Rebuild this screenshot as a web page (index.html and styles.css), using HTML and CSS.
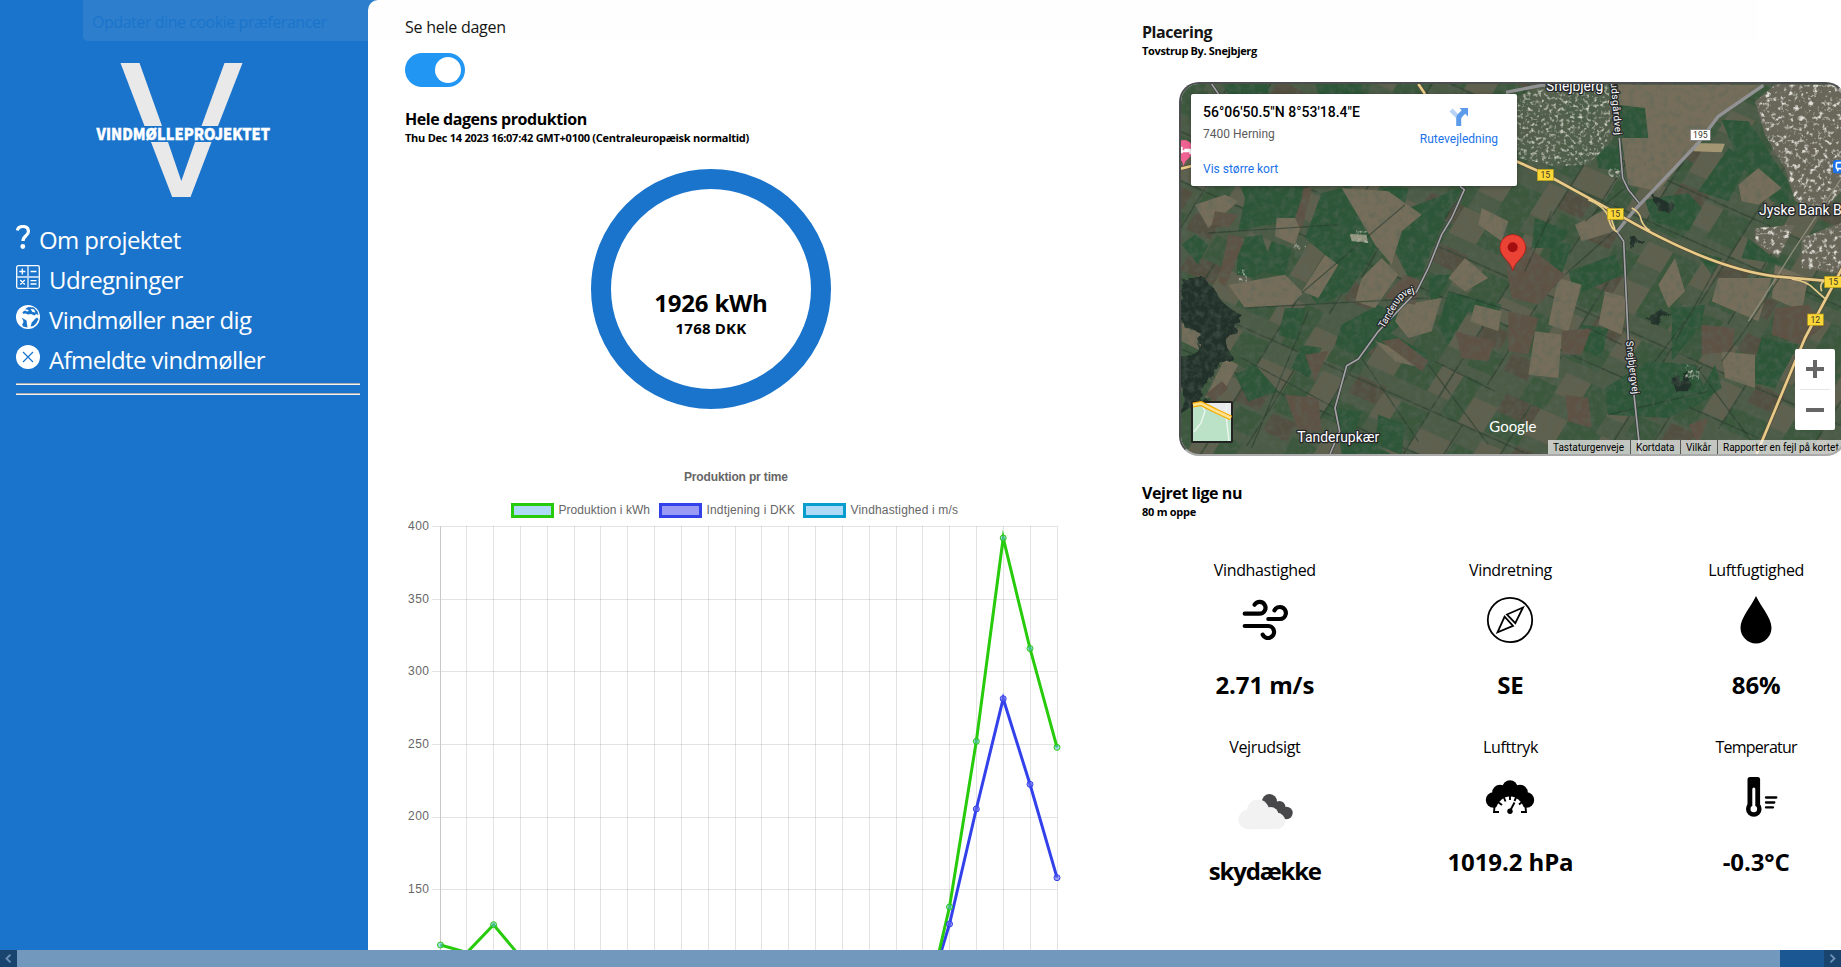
FILE: index.html
```html
<!DOCTYPE html>
<html lang="da">
<head>
<meta charset="utf-8">
<title>Vindmølleprojektet</title>
<link rel="stylesheet" href="styles.css">
</head>
<body>
<div class="page">
  <nav class="sidebar">
    <svg class="logo" width="180" height="140" viewBox="94 60 180 140">
      <g fill="#e9e9e9">
        <path d="M120.5 63H139.5L162 126H144.500Z"/>
        <path d="M224.500 63H242.500L218 126H201.500Z"/>
        <path d="M151 142H168L181.300 181L195 142H211.500L190.500 197H172.200Z"/>
      </g>
      <text class="logo-text" x="96.500" y="139.500" textLength="173.500" lengthAdjust="spacingAndGlyphs">VINDMØLLEPROJEKTET</text>
    </svg>
    <ul class="menu">
      <li><svg width="14" height="24" viewBox="0 0 14 24"><path d="M1.300 5.500C2 2.500 4 1.500 7 1.500C10.500 1.500 12.400 3.500 12.400 6.500C12.400 11 7 10.500 7 16" fill="none" stroke="#fff" stroke-width="3.200"/><circle cx="6.800" cy="21.500" r="2.400" fill="#fff"/></svg><a>Om projektet</a></li>
      <li><svg width="24" height="24" viewBox="0 0 24 24" fill="none" stroke="#fff" stroke-width="1.300"><rect x=".7" y=".7" width="22.600" height="22.600" rx="1.500"/><path d="M12 1V23M1 12H23" stroke="#b5d3f0" stroke-width="1.800"/><path d="M3.300 6.500H9.300M6.300 3.500V9.500M14.500 6.500H20.500M4.300 15L8.800 19.500M8.800 15L4.300 19.500M14.500 15.700H20.500M14.500 19H20.500"/></svg><a>Udregninger</a></li>
      <li><svg width="24" height="24" viewBox="0 0 24 24"><circle cx="12" cy="12" r="12" fill="#fff"/><path d="M8 1.200L11 1.500L10 3.500L6.500 6L4.500 9L7 9.500L6.500 11L3.500 10L1.500 8.500L4 4Z" fill="#fff"/><path d="M12.500 2L18 2.500L21.500 6.500L22.500 10L20 9L18.500 10.500L15 9L12 9.500L9.500 8.500L7 8.800L6.500 7L9 5.500L11 6.500L13 6L11.500 4.500L9 4.500L10.500 3ZM5.500 12.500L10.500 15.500L11 19L11.500 22.500L7 21.500L6.200 19.500L7.500 17L7 15Z" fill="#1b74cb"/><path d="M14.500 21.500L15.800 17.500L19 14L21 12.500L22.500 14L20.500 18L17.500 21Z" fill="#1b74cb"/><path d="M14.500 4L18 4.200L19.500 7.500L16.500 7Z" fill="#fff"/></svg><a>Vindmøller nær dig</a></li>
      <li><svg width="24" height="24" viewBox="0 0 24 24"><circle cx="12" cy="12" r="12" fill="#fff"/><path d="M7 7L17 17M17 7L7 17" stroke="#1b74cb" stroke-width="1.300"/></svg><a>Afmeldte vindmøller</a></li>
    </ul>
    <hr class="rule"><hr class="rule">
  </nav>

  <main class="panel">
    <section class="production">
      <div class="switch-label">Se hele dagen</div>
      <div class="switch"><span class="knob"></span></div>
      <h2 class="heading">Hele dagens produktion</h2>
      <p class="sub">Thu Dec 14 2023 16:07:42 GMT+0100 (Centraleuropæisk normaltid)</p>
      <div class="ring"><strong class="kwh">1926 kWh</strong><strong class="dkk">1768 DKK</strong></div>
      <svg class="chart" width="737" height="541" viewBox="405 409 737 541">
        <text class="chart-title" x="684" y="481" textLength="104">Produktion pr time</text>
        <g stroke-width="3">
          <rect x="512.500" y="504.500" width="40" height="12" fill="#aedaf8" stroke="#27cb0b"/>
          <rect x="660.500" y="504.500" width="40" height="12" fill="#9a9bf5" stroke="#3341eb"/>
          <rect x="804.500" y="504.500" width="40" height="12" fill="#aedaf8" stroke="#079dcd"/>
        </g>
        <text x="558.500" y="514" textLength="91.500">Produktion i kWh</text>
        <text x="706.500" y="514" textLength="88.500">Indtjening i DKK</text>
        <text x="850.500" y="514" textLength="107.500">Vindhastighed i m/s</text>
        <g class="ylabels" text-anchor="end">
          <text x="429" y="530" textLength="21">400</text><text x="429" y="603" textLength="21">350</text><text x="429" y="675" textLength="21">300</text>
          <text x="429" y="748" textLength="21">250</text><text x="429" y="820" textLength="21">200</text><text x="429" y="893" textLength="21">150</text>
        </g>
        <path stroke="#000" stroke-opacity=".11" fill="none" d="M432 526.500H1057M432 599.500H1057M432 671.500H1057M432 744.500H1057M432 817.500H1057M432 889.500H1057M466.500 526V950M493.500 526V950M520.500 526V950M547.500 526V950M574.500 526V950M600.500 526V950M627.500 526V950M654.500 526V950M681.500 526V950M708.500 526V950M735.500 526V950M761.500 526V950M788.500 526V950M815.500 526V950M842.500 526V950M869.500 526V950M896.500 526V950M922.500 526V950M949.500 526V950M976.500 526V950M1003.500 526V950M1030.500 526V950M1057.500 526V950"/>
        <path stroke="#c9c9c9" d="M440.500 526V950"/>
        <g fill="none" stroke-width="3" stroke-miterlimit="10">
          <path stroke="#3341eb" d="M922.600 1013L949.500 924L976.300 809L1003.200 698.700L1030 784.300L1057 877.700"/>
          <path stroke="#27cb0b" d="M440.500 945L467 952.500L493.600 924.700L520.500 957M922.600 1022L949.500 907L976.300 741.300L1003.200 538L1030 648.500L1057 747.300"/>
        </g>
        <g fill="#6569ee" fill-opacity=".6" stroke="#3341eb">
          <circle cx="949.500" cy="924" r="3"/><circle cx="976.300" cy="809" r="3"/><circle cx="1003.200" cy="698.700" r="3"/><circle cx="1030" cy="784.300" r="3"/><circle cx="1057" cy="877.700" r="3"/>
        </g>
        <g fill="#5bb5f0" fill-opacity=".5" stroke="#27cb0b">
          <circle cx="440.500" cy="945" r="3"/><circle cx="493.600" cy="924.700" r="3"/><circle cx="949.500" cy="907" r="3"/><circle cx="976.300" cy="741.300" r="3"/><circle cx="1003.200" cy="538" r="3"/><circle cx="1030" cy="648.500" r="3"/><circle cx="1057" cy="747.300" r="3"/>
        </g>
      </svg>
    </section>

    <section class="place">
      <h2 class="heading">Placering</h2>
      <p class="sub sub-place">Tovstrup By. Snejbjerg</p>
      <div class="map">
        <svg class="satellite" width="663" height="370" viewBox="18 18 1989 1110">
          <defs>
            <filter id="grain" x="0" y="0" width="100%" height="100%"><feTurbulence type="fractalNoise" baseFrequency=".05" numOctaves="4" seed="4"/><feColorMatrix values="0 0 0 0 .1  0 0 0 0 .13  0 0 0 0 .1  1.2 0 0 0 -.5"/></filter>
            <filter id="town" x="0" y="0" width="100%" height="100%"><feTurbulence type="fractalNoise" baseFrequency=".07" numOctaves="3" seed="9" result="n"/><feColorMatrix in="n" values="0 0 0 0 .74  0 0 0 0 .72  0 0 0 0 .67  0 4 0 0 -2.100"/><feComposite in2="SourceGraphic" operator="in"/></filter>
            <filter id="houses" x="0" y="0" width="100%" height="100%"><feTurbulence type="fractalNoise" baseFrequency=".09" numOctaves="2" seed="2" result="n"/><feColorMatrix in="n" values="0 0 0 0 .62  0 0 0 0 .62  0 0 0 0 .55  0 3 0 0 -1.500"/><feComposite in2="SourceGraphic" operator="in"/></filter>
            <filter id="trees" x="-5%" y="-5%" width="110%" height="110%"><feTurbulence type="fractalNoise" baseFrequency=".02" numOctaves="3" seed="3" result="t"/><feDisplacementMap in="SourceGraphic" in2="t" scale="50"/></filter>
            <pattern id="fields" width="520" height="460" patternUnits="userSpaceOnUse" patternTransform="rotate(24) skewX(-8)">
              <rect width="520" height="460" fill="#4b5b45"/>
              <path fill="#3b573c" d="M0 0H110V90H0ZM180 0H240V140H180ZM320 60H430V130H320ZM60 150H150V250H60ZM260 200H330V330H260ZM400 220H520V290H400ZM0 330H90V460H0ZM170 360H250V430H170ZM360 380H440V460H360Z"/>
              <path fill="#5f604d" d="M110 0H180V90H110ZM240 50H320V140H240ZM430 0H520V90H430ZM0 150H60V230H0ZM150 200H260V270H150ZM330 160H400V270H330ZM90 290H150V400H90ZM440 330H520V400H440Z"/>
              <path fill="#534f40" d="M320 0H430V60H320ZM430 130H520V190H430ZM150 290H230V350H150ZM270 340H350V400H270Z"/>
              <path stroke="#2f4231" stroke-width="4" fill="none" d="M0 140H520M0 275H520M150 0V460M400 0V300M255 140V460"/>
            </pattern>
          </defs>
          <rect width="2010" height="1130" fill="url(#fields)"/>
          <g fill="#2c5637">
            <path d="M195 325L385 325L370 420L190 460L210 360ZM440 345L520 325L610 500L520 640L430 680L395 640L450 530L390 480ZM190 480L260 470L290 560L240 600L185 590ZM290 490L350 510L330 595L255 580ZM700 390L860 330L800 440L740 590L700 600L655 510ZM620 330L700 330L690 380ZM760 590L830 590L770 690ZM60 470L100 500L70 560L20 500ZM330 690L390 690L370 790L310 770ZM500 740L610 680L700 720L560 840L480 800ZM380 800L440 810L400 900L350 870ZM620 750L760 830L720 870L600 780ZM180 890L240 860L310 940L220 970ZM480 990L560 1000L540 1060L650 1130L500 1130ZM610 1010L690 1040L680 1130L600 1100ZM820 640L980 680L960 740L880 700L820 800L790 740Z"/>
            <path d="M1130 480L1190 500L1150 620L1010 700L1120 640ZM1180 580L1320 530L1345 590L1200 650ZM1220 740L1300 750L1280 840L1210 810ZM1290 930L1420 850L1560 860L1600 960L1480 1020L1300 1010ZM1490 690L1590 680L1580 740L1490 850ZM1620 860L1640 930L1550 990ZM1660 210L1720 250L1660 370L1570 340ZM1720 480L1820 560L1700 540ZM1260 210L1340 200L1340 280L1270 270ZM1410 365L1540 345L1580 390L1540 460L1430 430ZM1640 125L1720 130L1840 310L1840 380L1790 370L1690 250ZM1080 420L1180 460L1150 510L1070 510ZM1560 520L1640 540L1610 590ZM1760 780L1870 800L1800 930L1720 910ZM1330 80L1410 90L1420 180L1350 190Z"/>
            <path d="M140 18H280V48H160ZM420 18H560V48H430Z"/>
          </g>
          <g fill="#766e5a">
            <path d="M500 330L640 340L740 410L680 460L650 560L600 500ZM305 420L385 420L360 500L300 475ZM160 620L330 590L385 645L350 680L210 690ZM450 530L490 560L430 660L380 640ZM560 600L620 540L670 590L600 690L540 670ZM680 680L800 660L770 760L700 780L660 730ZM900 680L980 700L970 760L885 730ZM870 540L940 600L870 640L820 600ZM60 380L150 350L190 370L100 450ZM150 840L190 860L140 950L90 960ZM600 790L720 830L740 870L660 850ZM920 390L1000 430L980 490L910 440ZM20 720L100 770L80 820L20 790Z"/>
            <path d="M1330 20L1770 20L1640 110L1540 230L1450 340L1360 320L1340 180L1420 180L1410 90L1330 80ZM1200 440L1300 390L1320 460L1220 490ZM1690 320L1750 270L1820 330L1750 380L1700 370ZM1630 600L1790 600L1750 730L1610 670ZM1080 760L1160 770L1150 900L1060 890ZM1290 640L1360 660L1340 770L1270 740ZM1800 560L1900 600L1880 700L1790 660ZM1640 820L1740 830L1740 930L1650 900ZM1150 600L1220 620L1180 760L1120 740ZM1450 620L1500 540L1530 640L1480 690Z"/>
          </g>
          <g fill="#5e5244">
            <path d="M120 400L190 410L160 450L110 440ZM160 470L210 480L150 630L130 610ZM360 420L390 330L410 330L380 460ZM640 640L690 590L740 610L720 680L630 660ZM620 790L670 780L760 850L740 880ZM330 950L430 960L440 1060L370 1060ZM390 830L460 820L420 910ZM840 760L960 790L940 850L860 840ZM990 540L1050 500L1170 590L1090 680L1010 660ZM1000 700L1090 720L1060 830L1000 820ZM1580 740L1680 750L1670 820L1580 830ZM1800 690L1900 680L1950 740L1880 800L1790 770ZM1160 760L1250 750L1220 830L1160 830ZM1170 950L1240 960L1250 1050L1180 1030ZM1540 1040L1600 1020L1570 1100ZM90 950L140 910L160 930L120 970Z"/>
          </g>
          <g fill="#20332b" filter="url(#trees)">
            <path d="M20 600L90 600L150 680L210 720L150 780L170 840L110 870L90 960L20 1010L20 850L70 820L80 770L20 740ZM1380 480L1400 480L1390 520L1370 520ZM1440 360L1490 370L1480 400L1450 400ZM1490 900L1540 880L1540 940L1500 940ZM1440 700L1480 700L1450 740L1420 730Z"/>
          </g>
          <g stroke="#2a3d2e" stroke-width="4" fill="none" opacity=".65">
            <path d="M210 690L760 660M380 645L690 380M610 510L560 600M490 440L100 465M760 860L940 1100M200 840L480 990M400 700L230 1110M560 840L730 1090M820 640L1010 700M780 850L960 940M1170 590L1350 430M1130 400L1050 580M1300 1010L1600 940M1640 540L1500 790M1820 590L1700 770L1640 850M1440 850L1560 690M1350 330L1230 430M1560 860L1730 1090M1240 750L1340 800"/>
          </g>
          <rect width="2010" height="1130" filter="url(#grain)"/>
          <path fill="#53604c" opacity=".8" d="M1020 60L1100 20H1300L1310 190L1240 260L1140 265L1030 240Z"/>
          <path fill="#6b685c" opacity=".9" d="M1740 70L1800 20H2010V330L1940 400L1860 370L1830 270L1770 170ZM1740 450L1860 440L1810 540L1740 490ZM1880 480L2010 430V590L1880 570Z"/>
          <g filter="url(#town)"><path d="M1740 70L1800 20H2010V330L1940 400L1860 370L1830 270L1770 170ZM1740 450L1860 440L1810 540L1740 490ZM1880 480L2010 430V590L1880 570Z"/></g>
          <g filter="url(#houses)"><path d="M1020 60L1100 20H1300L1310 190L1240 260L1140 265L1030 240ZM525 455L575 460L580 495L525 490ZM360 495L395 500L385 520L355 510ZM190 575L215 575L215 615L190 610ZM1530 860L1580 860L1570 910L1530 900ZM1300 270L1340 270L1340 300L1295 295Z"/></g>
          <path fill="#a39673" d="M1560 195L1650 197L1640 223L1556 220Z"/>
          <path fill="#b9b09c" opacity=".7" d="M525 468L575 470L578 492L530 490Z"/>
          <g fill="none" stroke-linejoin="round">
            <path d="M2000 300L1860 510L1720 730" stroke="#8c8c7a" stroke-width="4"/>
            <path d="M110 18L132 50M855 325L868 335L830 420L800 470L760 570L725 640L610 760L550 843L515 863L480 990L494 1060L465 1128M1333 180L1343 300L1360 335L1395 378M1325 460L1346 490L1360 790L1396 1128" stroke="#333b38" stroke-width="9"/>
            <path d="M110 18L132 50M855 325L868 335L830 420L800 470L760 570L725 640L610 760L550 843L515 863L480 990L494 1060L465 1128M1333 180L1343 300L1360 335L1395 378M1325 460L1346 490L1360 790L1396 1128" stroke="#a5a3a6" stroke-width="5"/>
            <path d="M993 43L1110 20M1765 22L1630 115L1570 195L1480 290L1375 400L1325 462" stroke="#929295" stroke-width="10"/>
            <path d="M730 18L750 48M18 272L50 264M1020 248L1110 288L1310 398Q1600 570 1800 595L2007 613M2007 560L1890 780L1745 1128" stroke="#554b36" stroke-width="12"/>
            <g stroke="#e8cb88" stroke-width="8"><path d="M730 18L750 48M18 272L50 264M1020 248L1110 288L1310 398Q1600 570 1800 595L2007 613M2007 560L1890 780L1745 1128"/><path stroke-width="5" d="M1240 365Q1300 390 1303 430Q1310 455 1327 462M1320 455L1310 425M1370 390Q1395 400 1400 430Q1410 450 1425 458M1850 603Q1900 610 1920 635L1950 662M1940 640Q1930 610 1960 605"/></g>
          </g>
          <g stroke="#b89b1a" stroke-width="2" fill="#fbd737"><rect x="1087" y="274" width="48" height="34"/><rect x="1297" y="391" width="48" height="34"/><rect x="1949" y="595" width="56" height="34"/><rect x="1898" y="708" width="47" height="34"/></g>
          <rect x="1546" y="155" width="60" height="32" fill="#fff" stroke="#777" stroke-width="2"/>
          <g class="shield"><text x="1111" y="300">15</text><text x="1321" y="417">15</text><text x="1975" y="621">15</text><text x="1921" y="735">12</text><text x="1576" y="180">195</text></g>
          <g class="town-label"><text x="1113" y="38" textLength="172">Snejbjerg</text><text x="1752" y="411">Jyske Bank B</text><text x="367" y="1092" textLength="246">Tanderupkær</text></g>
          <path id="road-a" d="M626 752L672 675Q685 650 735 640" fill="none"/>
          <g class="road-label"><text><textPath href="#road-a" textLength="148">Tanderupvej</textPath></text><text transform="translate(1307 14) rotate(85)" textLength="158">udsgårdvej</text><text transform="translate(1353 790) rotate(83)" textLength="160">Snejbjergvej</text></g>
          <path d="M1013 578C1008 548 975 538 975 508A38 38 0 0 1 1052 508C1052 538 1020 548 1013 578Z" fill="#ea4335" stroke="#b31412" stroke-width="2"/><circle cx="1013" cy="508" r="15" fill="#a50e0e"/>
          <path d="M26 265C20 235 -5 240 -5 215A30 30 0 0 1 50 200V230C40 245 30 245 26 265Z" fill="#f06292"/><path d="M20 206V226M20 220H46M28 215H46V228" stroke="#fff" stroke-width="6" fill="none"/>
          <rect x="1974" y="246" width="44" height="40" rx="8" fill="#1a73e8"/><rect x="1984" y="254" width="30" height="18" rx="4" fill="none" stroke="#fff" stroke-width="5"/><path d="M1988 280V272" stroke="#fff" stroke-width="5"/>
          <text class="google" x="943" y="1062" textLength="141">Google</text>
        </svg>
        <div class="card">
          <div><div class="coords">56°06'50.5"N 8°53'18.4"E</div><div class="city">7400 Herning</div><a class="bigger">Vis større kort</a></div>
          <div class="route"><svg width="20" height="20" viewBox="0 0 20 20"><path d="M2 3L10 11" stroke="#b9d3f7" stroke-width="4.500" fill="none"/><path d="M9.700 19V12Q9.700 9.500 11.500 8L15 4.500" fill="none" stroke="#5b9be9" stroke-width="5"/><path d="M10.500 1H19V9.500Z" fill="#5b9be9"/></svg><a>Rutevejledning</a></div>
        </div>
        <svg class="thumb" width="42" height="42" viewBox="0 0 42 42"><rect width="42" height="42" rx="2" fill="#222"/><rect x="2" y="2" width="38" height="38" fill="#bbe2c6"/><path d="M16 2H40V16Z" fill="#e8eaed"/><path d="M36 2L35 14L38 40M10 3L14 10L10 22L3 31" stroke="#e9f5ee" stroke-width="1.500" fill="none"/><path d="M2 4L10 2.500L25 10L40 17" stroke="#f9ab00" stroke-width="5" fill="none"/><path d="M2 4L10 2.500L25 10L40 17" stroke="#fde293" stroke-width="2.500" fill="none"/></svg>
        <div class="zoom"><span class="plus"></span><i></i><span class="minus"></span></div>
        <div class="attribution"><span class="a1">Tastaturgenveje</span><span class="a2">Kortdata</span><span class="a3">Vilkår</span><span class="a4">Rapporter en fejl på kortet</span></div>
      </div>

      <h2 class="heading">Vejret lige nu</h2>
      <p class="sub">80 m oppe</p>
      <div class="weather">
        <div class="cell"><span class="name">Vindhastighed</span>
          <svg width="60" height="48" viewBox="0 0 60 48" fill="none" stroke="#000" stroke-width="4.200" stroke-linecap="round"><path d="M9.700 17.700H24.600A5.900 5.900 0 1 0 19.600 8.700M33.300 23H44.800A6 6 0 1 0 39.500 14.300M9.700 30H33A6 6 0 1 1 27.700 38.700"/></svg>
          <strong>2.71 m/s</strong></div>
        <div class="cell"><span class="name">Vindretning</span>
          <svg width="60" height="48" viewBox="0 0 60 48" fill="none" stroke="#000" stroke-width="1.800"><circle cx="30" cy="24" r="22.200"/><path d="M43 11.500L27 18.500L35.300 27.200ZM17.500 36.300L24.600 20.600L33 29.800Z"/></svg>
          <strong>SE</strong></div>
        <div class="cell"><span class="name">Luftfugtighed</span>
          <svg width="60" height="48" viewBox="0 0 60 48"><path d="M30 0C34 9 45.500 22 45.500 31.500A15.500 16 0 0 1 14.500 31.500C14.500 22 26 9 30 0Z"/></svg>
          <strong>86%</strong></div>
        <div class="cell"><span class="name">Vejrudsigt</span>
          <svg width="60" height="57" viewBox="0 0 60 57"><g fill="#48484a"><circle cx="34.500" cy="28.500" r="7.500"/><circle cx="44.500" cy="34" r="6"/><circle cx="51.500" cy="40" r="6.200"/><path d="M31 32L48 46L54 42L42 30Z"/></g><g fill="#f2f2f2"><circle cx="13" cy="46.500" r="9.700"/><circle cx="23" cy="37.500" r="11"/><circle cx="35.500" cy="42" r="8"/><circle cx="42" cy="48" r="8.200"/><rect x="12" y="40" width="30" height="16.200"/></g></svg>
          <strong class="tight">skydække</strong></div>
        <div class="cell"><span class="name">Lufttryk</span>
          <svg width="60" height="48" viewBox="0 0 60 48"><circle cx="30" cy="15" r="7.700"/><circle cx="20" cy="19.500" r="7.800"/><circle cx="40" cy="19.500" r="7.800"/><circle cx="13.500" cy="27" r="7.700"/><circle cx="46.500" cy="27" r="7.700"/><path d="M12 34L20 14H40L48 34Z"/><path d="M15 41A15 17.500 0 0 1 45 41Z" fill="#fff"/><path d="M14.500 33.500L14 39H19M45.500 33.500L46 39H41M18 29L22 32M42 29L39 31.500M23.500 23.500L25.500 28.500M36.500 23.500L34.500 28M30 21V27M30 38L34.500 29.500" stroke="#000" stroke-width="1.900" fill="none"/><circle cx="30" cy="38.300" r="2.700"/></svg>
          <strong>1019.2 hPa</strong></div>
        <div class="cell"><span class="name name-temp">Temperatur</span>
          <svg width="60" height="48" viewBox="0 0 60 48"><rect x="21.500" y="4" width="12.600" height="34" rx="2.500"/><circle cx="27.800" cy="36" r="7.800"/><path d="M27.800 16V36" stroke="#fff" stroke-width="3" stroke-linecap="round"/><circle cx="27.800" cy="36" r="3.300" fill="#fff"/><path d="M40 24.500H50.300M40 29.500H48.300M40 34.400H47" stroke="#000" stroke-width="2.300" stroke-linecap="round"/></svg>
          <strong>-0.3°C</strong></div>
      </div>
    </section>
  </main>
  <div class="cookie">Opdater dine cookie præferancer</div>
</div>
<div class="scrollbar">
  <span class="arrow"><svg width="7" height="9" viewBox="0 0 7 9"><path d="M5.500 .7L1.500 4.500L5.500 8.300" fill="none" stroke="#6f93b8" stroke-width="1.800"/></svg></span>
  <span class="grip"></span><span class="track"></span>
  <span class="arrow"><svg width="7" height="9" viewBox="0 0 7 9"><path d="M1.500 .7L5.500 4.500L1.500 8.300" fill="none" stroke="#6f93b8" stroke-width="1.800"/></svg></span>
</div>
</body>
</html>
```
FILE: styles.css
```css
* { box-sizing: border-box; }
html, body { height: 100%; margin: 0; overflow: hidden; }
body {
  display: grid;
  grid-template-rows: 1fr 17px;
  background: #1b74cb;
  font: 16px/22px "Open Sans", "Noto Sans", sans-serif;
  color: #000;
}
h2, p, ul { margin: 0; padding: 0; }
svg { display: block; flex: none; }

.page { position: relative; display: flex; min-height: 0; overflow: hidden; }

.sidebar { flex: none; width: 368px; padding: 60px 8px 0 16px; }
.logo { margin-left: 78px; }
.logo-text { font: 900 15.5px "Noto Sans CJK SC", "Noto Sans", sans-serif; fill: #fff; stroke: #fff; stroke-width: .4px; }
.menu { display: flex; flex-direction: column; margin-top: 20px; list-style: none; color: #fff; font-size: 24px; line-height: 40px; }
.menu li { display: flex; height: 40px; padding-top: 5px; gap: 9px; letter-spacing: -0.6px; white-space: nowrap; }
.menu a { height: 35px; margin-top: -5px; }
.rule { height: 2px; margin: 3px 0 8px; border: 0; border-top: 1px solid #a9adb2; background: #f3f3f3; }
.rule + .rule { margin: 0; }

.panel { flex: 1; min-width: 0; display: grid; grid-template-columns: 737px 737px; padding-left: 37px; background: #fff; border-top-left-radius: 10px; overflow: hidden; }
.production { padding-top: 16px; }
.switch-label { letter-spacing: -0.25px; }
.switch { width: 60px; height: 34px; margin: 15px 0 21px; padding: 4px; border-radius: 17px; background: #2196f3; display: flex; justify-content: flex-end; }
.knob { width: 26px; height: 26px; border-radius: 50%; background: #fff; }
.heading { font-size: 16px; line-height: 22px; font-weight: 700; letter-spacing: -0.43px; }
.sub { font-size: 11px; line-height: 15px; font-weight: 700; letter-spacing: -0.26px; }
.sub-place { letter-spacing: -0.35px; }
.ring { display: flex; flex-direction: column; align-items: center; width: 240px; height: 240px; margin: 24px 0 0 186px; padding-top: 98px; border: 20px solid #1b74cb; border-radius: 50%; }
.kwh { font-size: 24px; line-height: 32px; letter-spacing: -0.2px; }
.dkk { font-size: 15px; line-height: 18px; letter-spacing: 0.2px; }
.chart text { font: 12px "Liberation Sans", Arial, sans-serif; fill: #666; }
.chart .chart-title { font-weight: 700; }

.place { padding-top: 21px; }
.map { position: relative; width: 667px; height: 374px; margin: 24px 0 26px 37px; border: 2px solid; border-color: #4c4d4f #aaa #aaa #4c4d4f; border-radius: 20px; overflow: hidden; font-family: Roboto, sans-serif; }
.satellite { font-family: Roboto, sans-serif; }
.shield text { font-size: 26px; text-anchor: middle; fill: #3a3425; }
.town-label text { font-size: 42px; fill: #fff; stroke: #26282b; stroke-width: 8px; paint-order: stroke; stroke-linejoin: round; }
.road-label text { font-size: 30px; fill: #fff; stroke: #26282b; stroke-width: 8px; paint-order: stroke; stroke-linejoin: round; }
.google { font: 45px Lato, sans-serif; fill: #fff; }
.card { position: absolute; left: 10px; top: 10px; width: 326px; height: 92px; padding: 9px 19px 0 12px; display: flex; justify-content: space-between; background: #fff; border-radius: 2px; box-shadow: 0 1px 4px rgba(0,0,0,.3); font-size: 12px; line-height: 16px; white-space: nowrap; }
.coords { font-size: 14px; font-weight: 500; line-height: 19px; }
.city { margin-top: 4px; color: #5b5b5b; }
.card a { color: #1a73e8; }
.bigger { display: block; margin-top: 19px; }
.route { display: flex; flex-direction: column; align-items: center; gap: 4px; padding-top: 4px; }
.thumb { position: absolute; left: 10px; top: 317px; }
.zoom { position: absolute; left: 614px; top: 265px; width: 40px; height: 81px; padding: 11px 0; border-radius: 2px; background: #fff; display: flex; flex-direction: column; align-items: center; justify-content: space-between; }
.zoom i { width: 30px; height: 1px; background: #e6e6e6; }
.plus, .minus { width: 18px; height: 18px; background: linear-gradient(#666, #666) center / 18px 4px no-repeat; }
.plus { background: linear-gradient(#666, #666) center / 18px 4px no-repeat, linear-gradient(#666, #666) center / 4px 18px no-repeat; }
.attribution { position: absolute; left: 367px; top: 356px; height: 14px; display: flex; font-size: 10px; line-height: 16px; white-space: nowrap; background: rgba(245,245,245,.7); }
.attribution span { padding-left: 5px; border-right: 1px solid #555; }
.a1 { width: 83px; }
.a2 { width: 50px; }
.a3 { width: 37px; }
.attribution .a4 { width: 126px; border: 0; }

.weather { display: grid; grid-template-columns: repeat(3, 1fr); grid-auto-rows: 177px; margin-top: 40px; }
.cell { display: flex; flex-direction: column; align-items: center; }
.name { letter-spacing: -0.35px; }
.name-temp { letter-spacing: -0.75px; }
.cell svg { margin: 15px 0 25px; }
.cell strong { font-size: 24px; line-height: 32px; letter-spacing: -0.1px; }
.cell .tight { letter-spacing: -1.2px; }

.cookie { position: absolute; left: 83px; top: 0; width: 1675px; height: 41px; padding: 11px 9px; border-radius: 0 0 5px 5px; background: rgba(235,240,230,.09); color: #1b74cb; white-space: nowrap; letter-spacing: -0.45px; }

.scrollbar { display: flex; }
.arrow { width: 17px; display: flex; align-items: center; justify-content: center; background: #19446e; }
.grip { flex: 1; background: #7398be; }
.track { width: 44px; background: #1a5793; }
```
